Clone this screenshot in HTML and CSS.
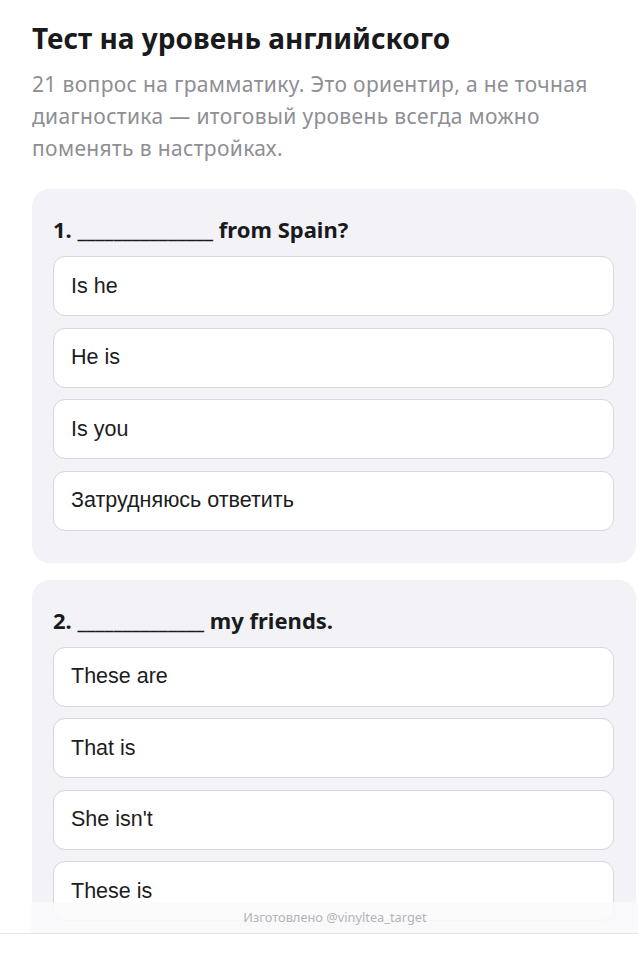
FILE: index.html
```html
<!DOCTYPE html>
<html lang="ru">
<head>
<meta charset="utf-8">
<title>Тест на уровень английского</title>
<link rel="stylesheet" href="styles.css">
</head>
<body>
<div class="screen">
  <main class="page">
    <header class="intro">
      <h1 class="intro-title">Тест на уровень английского</h1>
      <p class="intro-text">21 вопрос на грамматику. Это ориентир, а не точная диагностика — итоговый уровень всегда можно поменять в настройках.</p>
    </header>

    <section class="question">
      <h2 class="question-title">1. _______________ from Spain?</h2>
      <div class="options">
        <button class="option">Is he</button>
        <button class="option">He is</button>
        <button class="option">Is you</button>
        <button class="option">Затрудняюсь ответить</button>
      </div>
    </section>

    <section class="question">
      <h2 class="question-title">2. ______________ my friends.</h2>
      <div class="options">
        <button class="option">These are</button>
        <button class="option">That is</button>
        <button class="option">She isn't</button>
        <button class="option">These is</button>
        <button class="option">Затрудняюсь ответить</button>
      </div>
    </section>
  </main>
  <div class="credit">Изготовлено @vinyltea_target</div>
</div>
<div class="bottom-bar"></div>
</body>
</html>
```
FILE: styles.css
```css
* { box-sizing: border-box; }

html, body {
  margin: 0;
  padding: 0;
  background: #ffffff;
}

body {
  font-family: "Noto Sans", "Liberation Sans", sans-serif;
  color: #1c1c1e;
}

.screen {
  position: relative;
  height: 933px;
  overflow: hidden;
}

.page {
  padding: 20px 2px 0 32px;
}

.intro-title {
  margin: 0;
  font-size: 28px;
  line-height: 36px;
  font-weight: 700;
  color: #1a1a1c;
}

.intro-text {
  margin: 12px 0 0;
  font-size: 21px;
  line-height: 32px;
  letter-spacing: 0.35px;
  color: #8e8e93;
  max-width: 590px;
}

.question {
  margin-top: 25px;
  background: #f2f2f7;
  border-radius: 18px;
  padding: 26px 22px 32px 21px;
}

.question + .question {
  margin-top: 17px;
}

.question-title {
  margin: 0 0 13px;
  font-size: 22px;
  line-height: 28px;
  font-weight: 700;
  color: #1a1a1c;
}

.options {
  display: flex;
  flex-direction: column;
  gap: 11.5px;
}

.option {
  display: block;
  width: 100%;
  height: 60px;
  padding: 0 17px;
  text-align: left;
  font-family: "Liberation Sans", Arial, sans-serif;
  font-size: 21.5px;
  color: #1c1c1e;
  background: #ffffff;
  border: 1px solid #d6d6db;
  border-radius: 12px;
}

.credit {
  position: absolute;
  left: 30px;
  right: 0;
  bottom: 0;
  height: 31px;
  padding-left: 2px;
  background: rgba(250, 250, 252, 0.85);
  font-family: "Noto Sans", "Liberation Sans", sans-serif;
  font-size: 12.8px;
  line-height: 31px;
  text-align: center;
  color: #b3b3b8;
}

.bottom-bar {
  height: 40px;
  border-top: 1px solid #e3e3e8;
  background: #ffffff;
}
```
